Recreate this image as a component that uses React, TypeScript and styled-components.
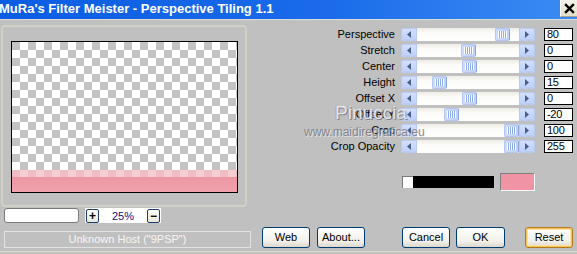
import React from "react";
import styled, { createGlobalStyle, css } from "styled-components";

const Global = createGlobalStyle`
  html, body { margin: 0; padding: 0; background: #c0c0c0; }
  body { width: 577px; height: 254px; overflow: hidden; font-family: "Liberation Sans", Arial, sans-serif; }
`;

const Window = styled.div`
  position: relative;
  width: 577px;
  height: 254px;
  display: flex;
  flex-direction: column;
  background: #c0c0c0;
  overflow: hidden;
`;

const TitleBar = styled.div`
  flex: none;
  height: 19px;
  display: flex;
  justify-content: space-between;
  align-items: flex-start;
  background: linear-gradient(to right, #0b5de2 0%, #1a6aea 55%, #3a8cf3 100%);
  border-bottom: 1px solid #dcdcdc;
`;

const TitleText = styled.div`
  margin-left: -1px;
  color: #fff;
  font: bold 13px/17px "Liberation Sans", Arial, sans-serif;
  white-space: nowrap;
`;

const CloseBtn = styled.div`
  width: 17px;
  height: 17px;
  box-sizing: border-box;
  display: flex;
  align-items: center;
  justify-content: center;
  background: linear-gradient(#f4f2e8, #e4e0cc);
  border-left: 1px solid #ffffff;
  border-bottom: 1px solid #a8a494;
`;

const Content = styled.div`
  flex: none;
  height: 231px;
  display: flex;
`;

const BottomEdge = styled.div`
  flex: none;
  height: 1px;
  background: #dcd9ce;
`;

/* ---------- left column ---------- */
const LeftCol = styled.div`
  width: 252px;
  flex: none;
  display: flex;
  flex-direction: column;
`;

const GroupBox = styled.div`
  margin: 5px 0 0 1px;
  width: 246px;
  height: 182px;
  box-sizing: border-box;
  border: 2px solid #d0d0c4;
  border-radius: 4px;
  padding: 14px 0 0 8px;
`;

const Preview = styled.div`
  width: 227px;
  height: 152px;
  box-sizing: border-box;
  border: 1px solid #000;
  display: flex;
  flex-direction: column;
`;

const Checker = styled.div`
  height: 128px;
  background: repeating-conic-gradient(#ffffff 0 25%, #c3c3c3 0 50%) 0 0 / 16px 16px;
`;

const LightBand = styled.div`
  height: 7px;
  background: repeating-conic-gradient(#f5ced3 0 25%, #efbcc3 0 50%) 0 0 / 16px 16px;
`;

const PinkBand = styled.div`
  flex: 1;
  background: linear-gradient(#ed97a4, #f0a1ad);
`;

const ControlsRow = styled.div`
  margin: 1px 0 0 4px;
  height: 15px;
  display: flex;
  gap: 6px;
`;

const TextBox = styled.div`
  width: 75px;
  height: 15px;
  box-sizing: border-box;
  border: 1px solid #7a7a7a;
  border-radius: 3px;
  background: #fff;
`;

const ZoomBox = styled.div`
  width: 76px;
  height: 15px;
  box-sizing: border-box;
  padding: 0 1px;
  display: flex;
  align-items: center;
  background: #fff;
`;

const ZoomBtn = styled.div`
  width: 13px;
  height: 14px;
  box-sizing: border-box;
  border: 1px solid #1d3b6c;
  border-radius: 2px;
  background: linear-gradient(#ffffff, #e8e6dc);
  display: flex;
  align-items: center;
  justify-content: center;
  font: bold 12px/12px "Liberation Sans", Arial, sans-serif;
  color: #000;
`;

const ZoomValue = styled.div`
  flex: 1;
  text-align: center;
  color: #10107a;
  font: 11px/14px "Liberation Sans", Arial, sans-serif;
`;

const StatusBar = styled.div`
  margin: 8px 0 0 4px;
  width: 247px;
  height: 17px;
  box-sizing: border-box;
  border: 1px solid #e2e2e2;
  color: #f6f6f6;
  text-align: center;
  font: 11px/15px "Liberation Sans", Arial, sans-serif;
  white-space: nowrap;
`;

/* ---------- right column ---------- */
const RightCol = styled.div`
  flex: 1;
  display: flex;
  flex-direction: column;
`;

const SliderList = styled.div`
  margin-top: 8px;
  display: flex;
  flex-direction: column;
  gap: 3px;
`;

const SliderRow = styled.div`
  height: 13px;
  display: flex;
  align-items: center;
`;

const Label = styled.div`
  width: 143px;
  text-align: right;
  color: #000;
  font: 11px/13px "Liberation Sans", Arial, sans-serif;
  white-space: nowrap;
`;

const ScrollBar = styled.div`
  margin-left: 6px;
  width: 134px;
  height: 13px;
  display: flex;
`;

const ArrowBtn = styled.div`
  width: 16px;
  height: 13px;
  flex: none;
  box-sizing: border-box;
  border: 1px solid #b9cbf5;
  border-radius: 2px;
  background: linear-gradient(#d3dffd, #bccef9);
  display: flex;
`;

const Track = styled.div`
  position: relative;
  flex: 1;
  background: linear-gradient(#efede6, #fbfbf8 40%, #fefefd);
`;

const Thumb = styled.div`
  position: absolute;
  top: 0;
  width: 15px;
  height: 13px;
  box-sizing: border-box;
  border: 1px solid #b3c6f3;
  border-right-color: #8aa3d9;
  border-radius: 2px;
  background: linear-gradient(to right, #cfdcfd, #bdcffa);
  display: flex;
  align-items: center;
  justify-content: center;
`;

const Grip = styled.div`
  width: 9px;
  height: 7px;
  background: repeating-linear-gradient(to right, #ffffff 0 1px, #8facea 1px 2px);
`;

const ValueBox = styled.div`
  margin-left: 9px;
  width: 29px;
  height: 13px;
  box-sizing: border-box;
  border: 1px solid #000;
  background: #fff;
  padding-left: 2px;
  color: #000;
  font: 11px/11px "Liberation Sans", Arial, sans-serif;
  letter-spacing: -0.3px;
`;

const SwatchRow = styled.div`
  margin-top: 20px;
  padding-left: 150px;
  display: flex;
  align-items: center;
`;

const WhiteSquare = styled.div`
  width: 11px;
  height: 12px;
  box-sizing: border-box;
  background: #fff;
  border-left: 1px solid #7a7a7a;
  border-top: 1px solid #7a7a7a;
`;

const BlackBar = styled.div`
  width: 81px;
  height: 12px;
  background: #000;
`;

const PinkSwatch = styled.div`
  margin-left: 6px;
  width: 35px;
  height: 18px;
  box-sizing: border-box;
  background: #ef93a5;
  border: 1px solid #ffffff;
  border-top-color: #808080;
  border-left-color: #808080;
`;

const ButtonRow = styled.div`
  margin-top: 36px;
  padding-left: 10px;
  display: flex;
`;

const Button = styled.div<{ $w: number; $ml: number; $focus?: boolean }>`
  width: ${(p) => p.$w}px;
  height: 21px;
  margin-left: ${(p) => p.$ml}px;
  box-sizing: border-box;
  border: 1px solid #003c74;
  border-radius: 3px;
  background: linear-gradient(#ffffff, #f1f0ea 70%, #dcd7ca);
  display: flex;
  align-items: center;
  justify-content: center;
  color: #000;
  font: 11px/13px "Liberation Sans", Arial, sans-serif;
  ${(p) =>
    p.$focus &&
    css`
      border-color: #b47a1e;
      box-shadow: inset 0 0 0 1px #f6c35b, inset 0 0 0 2px #fde2a6;
    `}
`;

/* ---------- watermark overlay ---------- */
const Watermark = styled.div`
  position: absolute;
  left: 304px;
  top: 105px;
  width: 130px;
  height: 36px;
  pointer-events: none;
`;

const WmName = styled.div`
  position: absolute;
  left: 31px;
  top: 0;
  font: 19px/16px "Liberation Sans", Arial, sans-serif;
  color: rgba(238, 238, 246, 0.92);
  text-shadow: 1px 1px 0 rgba(110, 110, 120, 0.75), -1px 0 0 rgba(140, 140, 150, 0.55);
  white-space: nowrap;
`;

const WmUrl = styled.div`
  position: absolute;
  left: 0;
  top: 21px;
  font: 12px/13px "Liberation Sans", Arial, sans-serif;
  color: rgba(125, 125, 135, 0.92);
  text-shadow: 1px 1px 0 rgba(235, 235, 235, 0.8);
  white-space: nowrap;
`;

const sliders = [
  { label: "Perspective", value: "80", thumb: 0.897 },
  { label: "Stretch", value: "0", thumb: 0.506 },
  { label: "Center", value: "0", thumb: 0.517 },
  { label: "Height", value: "15", thumb: 0.172 },
  { label: "Offset X", value: "0", thumb: 0.517 },
  { label: "Offset Y", value: "-20", thumb: 0.31 },
  { label: "Crop", value: "100", thumb: 1 },
  { label: "Crop Opacity", value: "255", thumb: 1 },
];

const TRAVEL = 134 - 32 - 15;

const LeftArrow = () => (
  <svg width="14" height="11" viewBox="0 0 14 11">
    <polygon points="9,2 5,5.5 9,9" fill="#4d6185" />
  </svg>
);
const RightArrow = () => (
  <svg width="14" height="11" viewBox="0 0 14 11">
    <polygon points="5,2 9,5.5 5,9" fill="#4d6185" />
  </svg>
);

export default function App() {
  return (
    <>
      <Global />
      <Window>
        <TitleBar>
          <TitleText>MuRa's Filter Meister - Perspective Tiling 1.1</TitleText>
          <CloseBtn>
            <svg width="11" height="11" viewBox="0 0 11 11">
              <path d="M2 2 L9 9 M9 2 L2 9" stroke="#000" strokeWidth="2.4" strokeLinecap="square" />
            </svg>
          </CloseBtn>
        </TitleBar>
        <Content>
          <LeftCol>
            <GroupBox>
              <Preview>
                <Checker />
                <LightBand />
                <PinkBand />
              </Preview>
            </GroupBox>
            <ControlsRow>
              <TextBox />
              <ZoomBox>
                <ZoomBtn>+</ZoomBtn>
                <ZoomValue>25%</ZoomValue>
                <ZoomBtn>−</ZoomBtn>
              </ZoomBox>
            </ControlsRow>
            <StatusBar>Unknown Host ("9PSP")</StatusBar>
          </LeftCol>
          <RightCol>
            <SliderList>
              {sliders.map((s) => (
                <SliderRow key={s.label}>
                  <Label>{s.label}</Label>
                  <ScrollBar>
                    <ArrowBtn>
                      <LeftArrow />
                    </ArrowBtn>
                    <Track>
                      <Thumb style={{ left: `${Math.round(s.thumb * TRAVEL)}px` }}>
                        <Grip />
                      </Thumb>
                    </Track>
                    <ArrowBtn>
                      <RightArrow />
                    </ArrowBtn>
                  </ScrollBar>
                  <ValueBox>{s.value}</ValueBox>
                </SliderRow>
              ))}
            </SliderList>
            <SwatchRow>
              <WhiteSquare />
              <BlackBar />
              <PinkSwatch />
            </SwatchRow>
            <ButtonRow>
              <Button $w={48} $ml={0}>Web</Button>
              <Button $w={48} $ml={7}>About...</Button>
              <Button $w={48} $ml={37}>Cancel</Button>
              <Button $w={49} $ml={6}>OK</Button>
              <Button $w={48} $ml={20} $focus>Reset</Button>
            </ButtonRow>
          </RightCol>
        </Content>
        <BottomEdge />
        <Watermark>
          <WmName>Pinuccia</WmName>
          <WmUrl>www.maidiregrafica.eu</WmUrl>
        </Watermark>
      </Window>
    </>
  );
}
